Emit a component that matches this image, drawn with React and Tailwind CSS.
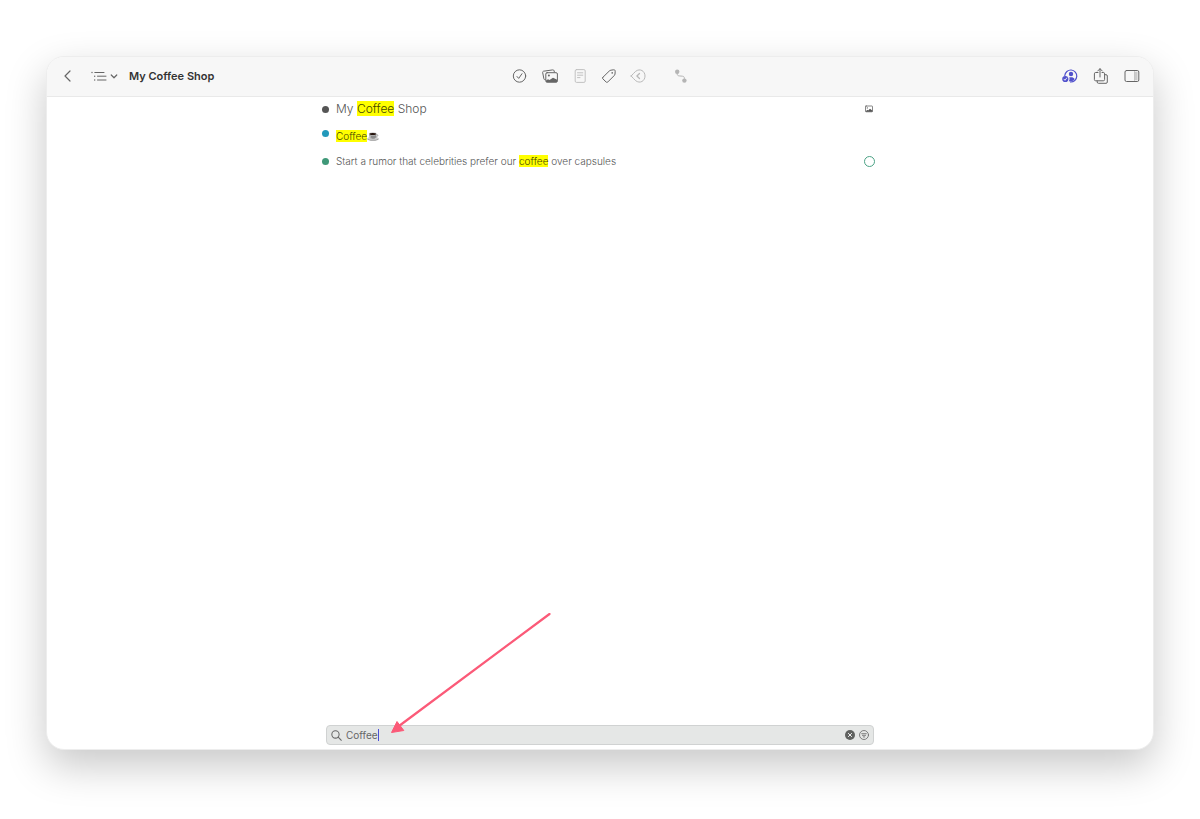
import React, { useState } from "react";
import clsx from "clsx";

const RESULTS = [
  { id: 1, before: "My ", match: "Coffee", after: " Shop", dot: "bg-[#555555]", size: "text-[12px]", row: "h-6", image: true },
  { id: 2, before: "", match: "Coffee", after: "", dot: "bg-[#2299bb] mb-1.5", size: "text-[10px]", row: "h-[30px]", emoji: true },
  { id: 3, before: "Start a rumor that celebrities prefer our ", match: "coffee", after: " over capsules", dot: "bg-[#3f9878]", size: "text-[10px]", row: "h-5", todo: true },
];

function Icon({ className, children, ...props }) {
  return (
    <svg
      viewBox="0 0 16 16"
      fill="none"
      stroke="currentColor"
      strokeWidth="1"
      strokeLinecap="round"
      strokeLinejoin="round"
      aria-hidden="true"
      className={clsx("shrink-0", className || "size-4")}
      {...props}
    >
      {children}
    </svg>
  );
}

function ToolButton({ label, className, children, ...props }) {
  return (
    <button type="button" aria-label={label} className={clsx("flex items-center", className)} {...props}>
      {children}
    </button>
  );
}

function CoffeeCup() {
  return (
    <svg viewBox="0 0 12 10" role="img" aria-label="coffee" className="inline h-2.5 w-3 align-[-1px]">
      <ellipse cx="6" cy="7.9" rx="5.7" ry="1.8" fill="#999999" />
      <ellipse cx="6" cy="7.4" rx="5.3" ry="1.4" fill="#d0d0d0" />
      <path d="M9 3.6c2.4-.6 2.7 2-.7 2.5" fill="none" stroke="#888" strokeWidth=".8" />
      <path d="M2 2.8h7.6c0 3-1.3 5-2.8 5H4.8C3.3 7.8 2 5.8 2 2.8Z" fill="#8c8c8c" />
      <path d="M3.2 4.5c.4 1.600 1 2.500 1.800 3h-.6C3.300 6.800 2.700 5.500 2.500 4Z" fill="#d8d8d8" />
      <ellipse cx="5.8" cy="2.9" rx="3.9" ry="1.6" fill="#ccc" />
      <ellipse cx="5.8" cy="3" rx="3.3" ry="1.1" fill="#24120c" />
    </svg>
  );
}

function Toolbar() {
  return (
    <header className="grid h-10 grid-cols-[1fr_auto_1fr] items-center border-b border-[#e9e9e9] bg-[#f7f7f7] px-[13px] pb-px text-[#666666]">
      <div className="flex items-center">
        <ToolButton label="Back">
          <Icon strokeWidth="1.2"><path d="M10 3 5 8l5 5" /></Icon>
        </ToolButton>
        <ToolButton label="Outline" className="ml-[15px] gap-[3px]">
          <Icon>
            <path d="M3.8 4.5H13M6.5 8.2H15M6.5 12H15" />
            <g fill="currentColor" stroke="none">
              <circle cx="1" cy="4.5" r=".7" />
              <circle cx="3.7" cy="8.2" r=".7" />
              <circle cx="3.7" cy="12" r=".7" />
            </g>
          </Icon>
          <Icon className="size-2" strokeWidth="2.4"><path d="m2.500 6 5.500 5.500L13.500 6" /></Icon>
        </ToolButton>
        <h1 className="ml-[11px] text-[11px] font-semibold whitespace-nowrap text-[#333333]">My Coffee Shop</h1>
      </div>

      <nav aria-label="Item actions" className="flex items-center gap-[13px]">
        <ToolButton label="Task">
          <Icon>
            <circle cx="7.5" cy="8" r="6.2" />
            <path d="m5 8.500 1.700 1.900 3.300-4.700" />
          </Icon>
        </ToolButton>
        <ToolButton label="Image" className="ml-px">
          <Icon>
            <path d="M3.200 11.700c-.8.100-1.100-.2-1.300-.9L.7 4.700c-.2-.8.100-1.300.9-1.500L10.700 1.900c.8-.1 1.200.2 1.400.9l.2 1" />
            <rect x="3.8" y="4.7" width="11.6" height="9.5" rx="1.3" />
            <circle cx="6.9" cy="7.5" r="1" fill="currentColor" stroke="none" />
            <path d="m4 12.500 2-1.300 1.500.8 3.500-2.300 4.200 2v1.500c0 .6-.4 1-1 1H5c-.6 0-1-.4-1-1Z" fill="currentColor" stroke="none" />
          </Icon>
        </ToolButton>
        <ToolButton label="Note" className="ml-px text-[#c1c1c1]">
          <Icon>
            <rect x="3.2" y="1.6" width="10" height="12.8" rx="1.3" />
            <path d="M5.500 4.800h5.300M5.500 7.200h5.300M5.500 9.600H8" />
          </Icon>
        </ToolButton>
        <ToolButton label="Tag">
          <Icon>
            <path d="m1.900 9.300 6.300-6.200c.5-.5 1-.8 1.700-.9l2.700-.4c1-.1 1.700.5 1.600 1.500L14 6c-.1.700-.4 1.200-.9 1.700l-6.200 6.200c-.6.600-1.300.6-1.900 0l-3.100-3c-.5-.5-.5-1.100 0-1.600Z" />
            <circle cx="11.2" cy="4.9" r=".8" fill="currentColor" stroke="none" />
          </Icon>
        </ToolButton>
        <ToolButton label="Reference" className="text-[#b8b8b8]">
          <Icon>
            <path d="M1.200 8c1.400-1.500 3-3.500 4.500-4.700C10 0 15 3 15 8s-5 8-9.300 4.700C4.200 11.500 2.600 9.500 1.200 8Z" />
            <path d="m9.500 5.500-2.600 2.500 2.600 2.500" strokeWidth="1.3" />
          </Icon>
        </ToolButton>
        <ToolButton label="Connect" className="ml-3.5 text-[#b5b5b5]">
          <Icon>
            <circle cx="4.2" cy="3.7" r="2.2" fill="currentColor" stroke="none" />
            <circle cx="11.4" cy="12.6" r="2.2" fill="currentColor" stroke="none" />
            <path d="M4.200 5v.8c0 1.300.7 2 2 2.100l3.200.3c1.300.1 2 .8 2 2.100V12" />
          </Icon>
        </ToolButton>
      </nav>

      <div className="flex items-center justify-end gap-[15px]">
        <ToolButton label="Collaboration" className="text-[#5050cc]">
          <Icon>
            <path d="M2.800 7.500A6 6 0 1 1 8.500 14" strokeWidth="1.2" />
            <g fill="currentColor" stroke="none">
              <circle cx="9" cy="6" r="2.2" />
              <path d="M6.700 13.300c1-1 1.200-2.700.4-3.700 2.200-.9 4.500-.4 5.500 1.400-.8 1.600-2.800 2.700-5.900 2.300Z" />
              <circle cx="3.3" cy="11" r="3.1" />
            </g>
            <path d="m2 11.200 1 1.100 1.700-2.300" stroke="#f7f7f7" strokeWidth=".9" />
          </Icon>
        </ToolButton>
        <ToolButton label="Share">
          <Icon>
            <path d="M5 4.500H2.700c-.9 0-1.300.4-1.300 1.300v5.700c0 .9.400 1.300 1.300 1.300h7.600c.9 0 1.300-.4 1.300-1.300V5.800c0-.9-.4-1.300-1.300-1.300H9" />
            <path d="M7 9V.8M4.700 3 7 .7 9.300 3" />
            <path d="M12 6.700h1c.9 0 1.300.4 1.300 1.300v6c0 .9-.4 1.300-1.300 1.300H5.500c-.9 0-1.300-.4-1.300-1.300v-1" />
          </Icon>
        </ToolButton>
        <ToolButton label="Sidebar">
          <Icon>
            <rect x="1" y="2.5" width="13.8" height="11" rx="1.5" />
            <path d="M10.800 3.800h2.700v8.400h-2.700Z" fill="#cccccc" stroke="none" />
            <path d="M10.500 3.500v9" strokeWidth=".6" stroke="#aaaaaa" />
          </Icon>
        </ToolButton>
      </div>
    </header>
  );
}

function ResultRow({ item }) {
  return (
    <li className={clsx("flex items-center", item.row)}>
      <span className={clsx("mr-[7px] size-[7px] shrink-0 rounded-full", item.dot)} />
      <p className={clsx("min-w-0 font-light leading-none text-[#555555]", item.size)}>
        {item.before}
        <mark className="bg-[#ffff00] text-[#444400]">{item.match}</mark>
        {item.after}
        {item.emoji && <CoffeeCup />}
      </p>
      {item.image && (
        <Icon className="ml-auto mr-0.5 h-2 w-2 text-[#555555]" viewBox="0 0 8 8" strokeWidth=".7">
          <rect x=".5" y="1" width="7" height="5.8" rx=".6" />
          <circle cx="2.3" cy="2.9" r=".6" fill="currentColor" stroke="none" />
          <path d="m.6 6.500 1.700-1.700.8.600L5 3.800l2.500 1.900v1H.6Z" fill="currentColor" stroke="none" />
        </Icon>
      )}
      {item.todo && (
        <input
          type="checkbox"
          aria-label="Mark as done"
          className="ml-auto size-[11px] shrink-0 appearance-none rounded-full border border-[#4ba285] checked:bg-[#4ba285]"
        />
      )}
    </li>
  );
}

function SearchBar() {
  const [query, setQuery] = useState("Coffee");

  return (
    <div className="relative mx-auto mb-1 w-full max-w-[548px]">
      <div className="flex h-5 items-center rounded border border-[#d0d2d2] bg-[#e5e7e6] px-1 text-[#666666]">
        <Icon className="size-[11px]" strokeWidth="1.5">
          <circle cx="6.5" cy="6.5" r="5.3" />
          <path d="m10.500 10.500 4.500 4.500" />
        </Icon>
        <input
          type="text"
          aria-label="Search"
          value={query}
          onChange={(e) => setQuery(e.target.value)}
          className="field-sizing-content ml-1 text-[10px] text-[#666666] outline-none"
        />
        <span className="h-3 w-px bg-[#4b50d8]" />
        <div className="ml-auto flex gap-1">
          <ToolButton label="Clear" onClick={() => setQuery("")}>
            <Icon className="size-[10px]" viewBox="0 0 10 10">
              <circle cx="5" cy="5" r="5" fill="#606260" stroke="none" />
              <path d="m3.400 3.400 3.200 3.200M6.600 3.400 3.400 6.600" stroke="#f0f0f0" />
            </Icon>
          </ToolButton>
          <ToolButton label="Filter">
            <Icon className="size-[10px]" viewBox="0 0 10 10" strokeWidth=".8">
              <circle cx="5" cy="5" r="4.5" />
              <path d="M2.700 3.700h4.600M3.400 5.300h3.200M4.300 6.900h1.400" />
            </Icon>
          </ToolButton>
        </div>
      </div>

      {/* Arrow pointing at the search field */}
      <svg
        viewBox="0 0 160 120"
        aria-hidden="true"
        className="pointer-events-none absolute bottom-3 left-[65px] h-[120px] w-40"
      >
        <path d="M158.500 1 8 113" stroke="#fb5a78" strokeWidth="2.2" strokeLinecap="round" />
        <path d="M.5 119.500 6 108.500l6.800 9Z" fill="#fb5a78" stroke="#fb5a78" strokeLinejoin="round" />
      </svg>
    </div>
  );
}

export default function App() {
  return (
    <div className="flex min-h-screen flex-col bg-white px-[46px] pt-14 pb-[69px] font-[Inter,sans-serif]">
      <div className="flex flex-1 flex-col overflow-hidden rounded-[18px] border border-[#ededed] bg-white shadow-[0_16px_40px_rgba(0,0,0,0.22)]">
        <Toolbar />
        <main className="flex flex-1 flex-col">
          <ul className="mx-auto w-full max-w-[556px] pr-[3px]">
            {RESULTS.map((item) => (
              <ResultRow key={item.id} item={item} />
            ))}
          </ul>
          <div className="mt-auto">
            <SearchBar />
          </div>
        </main>
      </div>
    </div>
  );
}
